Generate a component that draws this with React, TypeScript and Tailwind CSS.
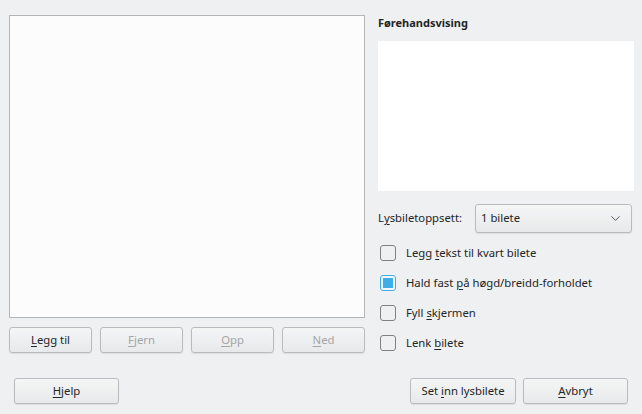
import { ChevronDown } from 'lucide-react'

const font = { fontFamily: '"Noto Sans", "DejaVu Sans", sans-serif' }

const Btn = ({ children, disabled, className = '' }: { children: React.ReactNode; disabled?: boolean; className?: string }) => (
  <button
    className={`h-[26px] rounded-[3px] border border-[#b9bbbc] bg-gradient-to-b from-[#f4f5f5] to-[#e8e9ea] text-[11.3px] shadow-[0_1px_1px_rgba(0,0,0,0.08)] ${
      disabled ? 'text-[#a4a6a7]' : 'text-[#232627]'
    } ${className}`}
  >
    {children}
  </button>
)

const Check = ({ checked, children }: { checked?: boolean; children: React.ReactNode }) => (
  <div className="flex h-[30px] items-center">
    <div
      className={`ml-[2px] flex h-[16px] w-[16px] items-center justify-center rounded-[3px] border ${
        checked ? 'border-[#3daee9] bg-[#f3f7f9]' : 'border-[#7f8183] bg-[#eff0f1]'
      }`}
    >
      {checked && <div className="h-[10px] w-[10px] bg-[#3daee9]" />}
    </div>
    <span className="ml-[10px] text-[11.3px] text-[#232627]">{children}</span>
  </div>
)

export default function App() {
  return (
    <div className="flex h-[414px] w-[642px] flex-col bg-[#eff0f1] text-[#232627]" style={font}>
      <div className="flex pt-[15px]">
        <div className="ml-[9px] flex w-[356px] flex-col">
          <div className="h-[303px] border border-[#b3b5b6] bg-[#fcfcfc]" />
          <div className="mt-[9px] flex gap-[8px]">
            <Btn className="w-[83px]">
              <span className="underline underline-offset-2">L</span>egg til
            </Btn>
            <Btn className="w-[83px]" disabled>
              <span className="underline underline-offset-2">F</span>jern
            </Btn>
            <Btn className="w-[83px]" disabled>
              <span className="underline underline-offset-2">O</span>pp
            </Btn>
            <Btn className="w-[83px]" disabled>
              <span className="underline underline-offset-2">N</span>ed
            </Btn>
          </div>
        </div>
        <div className="ml-[13px] flex w-[256px] flex-col">
          <div className="h-[26px] text-[11px] font-bold leading-[15px]">Førehandsvising</div>
          <div className="h-[150px] bg-white" />
          <div className="mt-[13px] flex h-[29px] items-center">
            <span className="w-[97px] text-[11.3px]">
              L<span className="underline underline-offset-2">y</span>sbiletoppsett:
            </span>
            <div className="flex h-[29px] w-[157px] items-center justify-between rounded-[3px] border border-[#b9bbbc] bg-gradient-to-b from-[#f4f5f5] to-[#e8e9ea] pl-[5px] pr-[8px] text-[11.3px] shadow-[0_1px_1px_rgba(0,0,0,0.08)]">
              <span>1 bilete</span>
              <ChevronDown size={15} strokeWidth={1.3} className="text-[#31363b]" />
            </div>
          </div>
          <div className="mt-[5px] flex flex-col">
            <Check>
              Legg <span className="underline underline-offset-2">t</span>ekst til kvart bilete
            </Check>
            <Check checked>
              Hald fast <span className="underline underline-offset-2">p</span>å høgd/breidd-forholdet
            </Check>
            <Check>
              Fyll <span className="underline underline-offset-2">s</span>kjermen
            </Check>
            <Check>
              Lenk <span className="underline underline-offset-2">b</span>ilete
            </Check>
          </div>
        </div>
      </div>
      <div className="mt-[20px] flex px-[14px]">
        <Btn className="w-[105px]">
          <span className="underline underline-offset-2">H</span>jelp
        </Btn>
        <div className="flex-1" />
        <Btn className="w-[106px]">
          Set <span className="underline underline-offset-2">i</span>nn lysbilete
        </Btn>
        <Btn className="ml-[7px] w-[105px]">
          <span className="underline underline-offset-2">A</span>vbryt
        </Btn>
      </div>
    </div>
  )
}
